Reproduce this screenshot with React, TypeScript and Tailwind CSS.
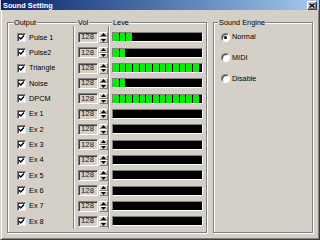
const channels = [
  { name: "Pulse 1", level: 3 },
  { name: "Pulse2", level: 2 },
  { name: "Triangle", level: 13 },
  { name: "Noise", level: 2 },
  { name: "DPCM", level: 13 },
  { name: "Ex 1", level: 0 },
  { name: "Ex 2", level: 0 },
  { name: "Ex 3", level: 0 },
  { name: "Ex 4", level: 0 },
  { name: "Ex 5", level: 0 },
  { name: "Ex 6", level: 0 },
  { name: "Ex 7", level: 0 },
  { name: "Ex 8", level: 0 },
];

const engines = [
  { name: "Normal", on: true },
  { name: "MIDI", on: false },
  { name: "Disable", on: false },
];

const Check = () => (
  <div className="w-[9px] h-[9px] bg-white border border-t-[#808080] border-l-[#808080] border-r-[#e8e6e0] border-b-[#e8e6e0] shadow-[inset_1px_1px_0_#404040] flex items-center justify-center">
    <svg width="7" height="7" viewBox="0 0 7 7">
      <path d="M1 3.2 L2.8 5 L6 1.6" stroke="#000" strokeWidth="1.4" fill="none" />
    </svg>
  </div>
);

const Radio = ({ on }: { on: boolean }) => (
  <div className="w-[9px] h-[9px] rounded-full bg-white border border-t-[#808080] border-l-[#808080] border-r-white border-b-white shadow-[inset_1px_1px_0_#404040] flex items-center justify-center">
    {on && <div className="w-[3px] h-[3px] rounded-full bg-black" />}
  </div>
);

const SpinBtn = ({ up }: { up?: boolean }) => (
  <div className="flex-1 bg-[#d4d0c8] border border-t-white border-l-white border-r-[#808080] border-b-[#808080] flex items-center justify-center">
    <svg width="5" height="3" viewBox="0 0 5 3">
      <polygon points={up ? "2.5,0 5,3 0,3" : "0,0 5,0 2.5,3"} fill="#000" />
    </svg>
  </div>
);

const Spin = () => (
  <div className="flex gap-[1px]">
    <div className="w-[20px] h-[11px] bg-[#d4d0c8] border border-t-[#808080] border-l-[#808080] border-r-white border-b-white shadow-[inset_1px_1px_0_#404040] flex items-center pl-[2px] leading-none text-[7.8px] text-[#202020]">
      128
    </div>
    <div className="w-[9px] h-[11px] flex flex-col">
      <SpinBtn up />
      <SpinBtn />
    </div>
  </div>
);

const Level = ({ n }: { n: number }) => (
  <div className="w-[91px] h-[10px] bg-black border border-t-[#808080] border-l-[#808080] border-r-white border-b-white flex items-center gap-[1px]">
    {Array.from({ length: n }).map((_, i) => (
      <div key={i} className="w-[5.67px] h-[8px] bg-[#00f000]" />
    ))}
  </div>
);

const Sep = () => <div className="w-[2px] border-l border-l-[#808080] border-r border-r-white" />;

const GroupLabel = ({ text, left }: { text: string; left: string }) => (
  <span className={`absolute -top-[5px] ${left} px-[1px] bg-[#d4d0c8] leading-[9px]`}>{text}</span>
);

export default function App() {
  return (
    <div className="w-[320px] h-[240px] bg-[#d4d0c8] flex flex-col border border-t-0 border-l-[#d4d0c8] border-r-[#404040] border-b-[#404040] shadow-[inset_1px_0_0_#fff,inset_-1px_-1px_0_#808080] font-['Liberation_Sans',Arial,sans-serif] text-[7.33px] text-black select-none">
      {/* caption */}
      <div className="h-[12px] bg-linear-to-r from-[#0a246a] to-[#a6caf0] flex items-center justify-between pl-[2px] pr-[2px]">
        <span className="font-bold text-white leading-none">Sound Setting</span>
        <div className="w-[10px] h-[9px] bg-[#d4d0c8] border border-t-white border-l-white border-r-[#404040] border-b-[#404040] shadow-[inset_-1px_-1px_0_#808080] flex items-center justify-center">
          <svg width="6" height="5" viewBox="0 0 6 5">
            <path d="M0.5 0.5 L5.5 4.5 M5.5 0.5 L0.5 4.5" stroke="#000" strokeWidth="1.3" />
          </svg>
        </div>
      </div>

      <div className="flex-1 flex gap-[6px] px-[6px] pt-[12px] pb-[6px]">
        {/* Output group */}
        <div className="relative w-[200px] border border-[#808080] shadow-[inset_1px_1px_0_#fff,1px_1px_0_#fff]">
          <GroupLabel text="Output" left="left-[5px]" />
          <GroupLabel text="Vol" left="left-[69px]" />
          <GroupLabel text="Leve" left="left-[104px]" />
          <div className="flex h-full py-[3px]">
            <div className="w-[65px] pl-[9px] pt-[3.33px]">
              {channels.map((c) => (
                <div key={c.name} className="h-[15.333px] flex items-center gap-[3px]">
                  <Check />
                  <span className="leading-none">{c.name}</span>
                </div>
              ))}
            </div>
            <Sep />
            <div className="w-[33px] pl-[3px] pt-[3.33px]">
              {channels.map((c) => (
                <div key={c.name} className="h-[15.333px] flex items-center">
                  <Spin />
                </div>
              ))}
            </div>
            <Sep />
            <div className="flex-1 pl-[2px] pt-[3.33px]">
              {channels.map((c) => (
                <div key={c.name} className="h-[15.333px] flex items-center">
                  <Level n={c.level} />
                </div>
              ))}
            </div>
          </div>
        </div>

        {/* Sound Engine group */}
        <div className="relative flex-1 border border-[#808080] shadow-[inset_1px_1px_0_#fff,1px_1px_0_#fff]">
          <GroupLabel text="Sound Engine" left="left-[4px]" />
          <div className="flex flex-col pl-[7px] pt-[3.4px]">
            {engines.map((e) => (
              <div key={e.name} className="h-[20.67px] flex items-center gap-[2px]">
                <Radio on={e.on} />
                <span className="leading-none">{e.name}</span>
              </div>
            ))}
          </div>
        </div>
      </div>
    </div>
  );
}
